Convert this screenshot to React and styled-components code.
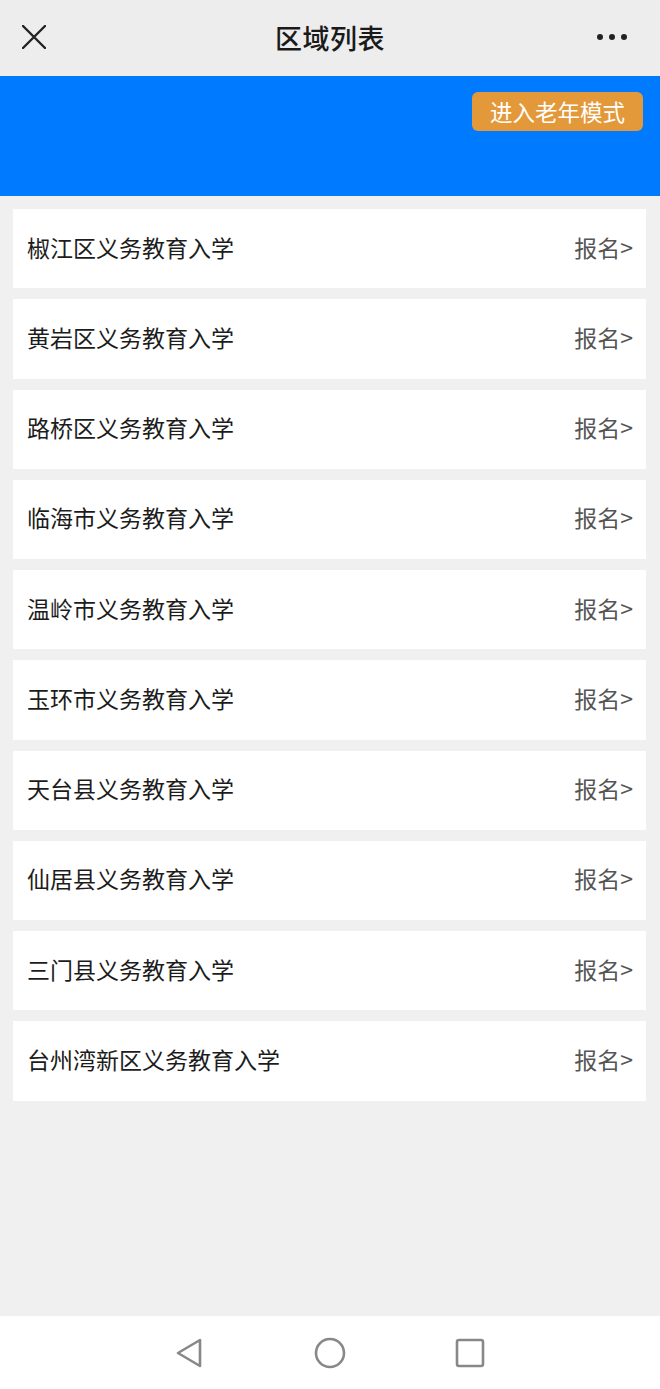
import React from 'react';
import styled, { createGlobalStyle } from 'styled-components';

const GlobalStyle = createGlobalStyle`
  html, body {
    margin: 0;
    padding: 0;
    background: #f0f0f0;
    font-family: "Noto Sans CJK SC", "Noto Sans", sans-serif;
  }
`

const Page = styled.div`
  width: 660px;
  height: 1389px;
  display: flex;
  flex-direction: column;
  background: #f0f0f0;
  overflow: hidden;
`

const TopBar = styled.div`
  height: 76px;
  flex-shrink: 0;
  display: flex;
  align-items: center;
  justify-content: space-between;
  padding: 0 32px 2px 22px;
  box-sizing: border-box;
  background: #ededed;
`

const IconBox = styled.div`
  width: 40px;
  display: flex;
  justify-content: ${p => p.$end ? 'flex-end' : 'flex-start'};
`

const Title = styled.div`
  font-size: 27px;
  line-height: 1;
  font-weight: 500;
  color: #1a1a1a;
  letter-spacing: 0.5px;
  margin-left: 10px;
`

const Banner = styled.div`
  height: 120px;
  flex-shrink: 0;
  background: #007aff;
  display: flex;
  justify-content: flex-end;
  align-items: flex-start;
  padding: 16px 17px 0 0;
  box-sizing: border-box;
`

const ElderButton = styled.div`
  width: 171px;
  height: 39px;
  border-radius: 6px;
  background: #e3993a;
  color: #fff;
  font-size: 22.5px;
  line-height: 1;
  display: flex;
  align-items: center;
  justify-content: center;
`

const List = styled.div`
  flex: 1;
  display: flex;
  flex-direction: column;
  gap: 11px;
  padding: 13px 14px 0 13px;
`

const Card = styled.div`
  height: 79.25px;
  background: #fff;
  display: flex;
  align-items: center;
  justify-content: space-between;
  padding: 0 13px 3px 14px;
  box-sizing: border-box;
`

const Name = styled.div`
  font-size: 23px;
  line-height: 1;
  color: #1c1c1c;
`

const Action = styled.div`
  font-size: 23px;
  line-height: 1;
  color: #555;
`

const NavBar = styled.div`
  height: 73px;
  flex-shrink: 0;
  background: #fff;
  display: flex;
  align-items: center;
  justify-content: center;
  gap: 109px;
`

const regions = [
  '椒江区义务教育入学',
  '黄岩区义务教育入学',
  '路桥区义务教育入学',
  '临海市义务教育入学',
  '温岭市义务教育入学',
  '玉环市义务教育入学',
  '天台县义务教育入学',
  '仙居县义务教育入学',
  '三门县义务教育入学',
  '台州湾新区义务教育入学',
]

export default function App() {
  return (
    <Page>
      <GlobalStyle />
      <TopBar>
        <IconBox>
          <svg width="24" height="24" viewBox="0 0 24 24">
            <path d="M1 1 L23 23 M23 1 L1 23" stroke="#222" strokeWidth="2.4" strokeLinecap="round" />
          </svg>
        </IconBox>
        <Title>区域列表</Title>
        <IconBox $end>
          <svg width="32" height="8" viewBox="0 0 32 8">
            <circle cx="4" cy="4" r="3" fill="#222" />
            <circle cx="16" cy="4" r="3" fill="#222" />
            <circle cx="28" cy="4" r="3" fill="#222" />
          </svg>
        </IconBox>
      </TopBar>
      <Banner>
        <ElderButton>进入老年模式</ElderButton>
      </Banner>
      <List>
        {regions.map(r => (
          <Card key={r}>
            <Name>{r}</Name>
            <Action>报名&gt;</Action>
          </Card>
        ))}
      </List>
      <NavBar>
        <svg width="30" height="32" viewBox="0 0 30 32">
          <path d="M25 3 L25 29 L3 16 Z" fill="none" stroke="#888" strokeWidth="2.6" strokeLinejoin="round" />
        </svg>
        <svg width="32" height="32" viewBox="0 0 32 32">
          <circle cx="16" cy="16" r="14" fill="none" stroke="#888" strokeWidth="2.6" />
        </svg>
        <svg width="30" height="30" viewBox="0 0 30 30">
          <rect x="2" y="2" width="26" height="26" rx="2" fill="none" stroke="#888" strokeWidth="2.6" />
        </svg>
      </NavBar>
    </Page>
  )
}
